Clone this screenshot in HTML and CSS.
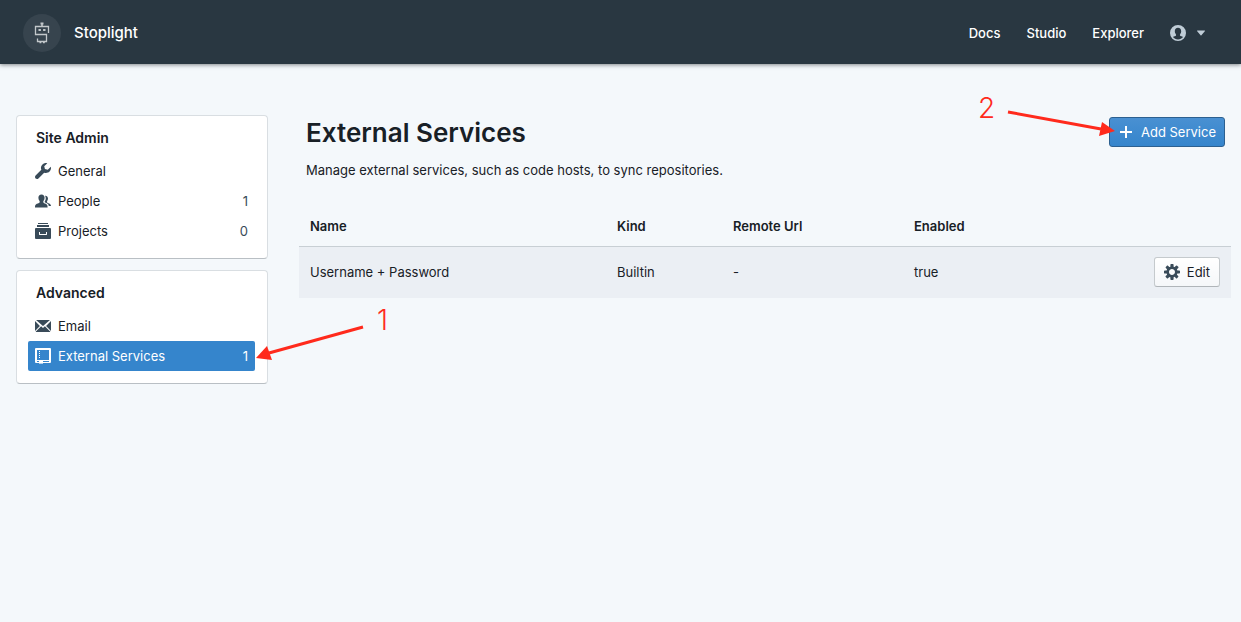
FILE: index.html
```html
<!DOCTYPE html>
<html lang="en">
<head>
<meta charset="utf-8">
<title>External Services - Stoplight</title>
<link rel="stylesheet" href="styles.css">
</head>
<body>
<header class="topbar">
  <a class="brand" href="#">
    <span class="brand-logo">
      <svg width="16" height="22" viewBox="0 0 16 22" fill="none" stroke="#c3c8cb" stroke-width="1.3" aria-hidden="true">
        <path d="M14.500 11V4.500H1.500V12.500H12.500V19.500H3.500V16.500"/>
        <path d="M8 4.500V2" stroke-width="1.600"/>
        <path d="M6.500 1.500h3M4.500 8h2.400M9.100 8h2.400" stroke-width="1.800"/>
        <path d="M5.500 20.500h1.800M9 20.500h1.800"/>
      </svg>
    </span>
    <span>Stoplight</span>
  </a>
  <nav class="topnav">
    <a href="#">Docs</a>
    <a href="#">Studio</a>
    <a href="#">Explorer</a>
    <button class="user-menu" type="button" aria-label="Account">
      <svg width="16" height="16" viewBox="0 0 16 16" aria-hidden="true"><path fill="#bfccd6" fill-rule="evenodd" d="M8 0a8 8 0 1 0 0 16A8 8 0 0 0 8 0zM8 14.400c-2.100 0-3.900-.9-5-2.400 .9-.5 2.600-.8 3-1.400 .3-.6 0-1.200-.4-1.800-.5-.7-.8-1.600-.8-2.600C4.800 4.100 6 2.700 8 2.700s3.200 1.400 3.200 3.500c0 1-.3 1.900-.8 2.600-.4.600-.7 1.200-.4 1.800.4.600 2.100.9 3 1.400-1.100 1.500-2.900 2.400-5 2.400z"/></svg>
      <svg width="8" height="6" viewBox="0 0 8 6" aria-hidden="true"><path fill="#bfccd6" d="M.6.500h6.800c.6 0 .7.400.4.800L4.400 5.200c-.2.300-.6.300-.8 0L.2 1.300C-.1.900 0 .5.600.5z"/></svg>
    </button>
  </nav>
</header>

<div class="page">
  <aside class="sidebar">
    <section class="card">
      <h2>Site Admin</h2>
      <a class="item" href="#">
        <svg width="16" height="16" viewBox="0 0 16 16" aria-hidden="true"><path d="M15.830 3.700l-3.060 3.050-2.840-.7-.7-2.830L12.290.170a5.004 5.004 0 0 0-4.830 1.290 4.967 4.967 0 0 0-1.120 5.360L.58 12.580c-.36.360-.58.860-.58 1.410 0 1.100.9 2 2 2 .55 0 1.050-.22 1.410-.59l5.770-5.770c1.790.690 3.910.330 5.350-1.120 1.320-1.300 1.740-3.150 1.300-4.810z"/></svg>
        <span>General</span>
      </a>
      <a class="item" href="#">
        <svg width="16" height="16" viewBox="0 0 16 16" aria-hidden="true"><path d="M6.500 1.500C8.500 1.500 9.600 2.900 9.600 4.700c0 1.300-.4 2.300-1 3.100-.4.600-.5 1.300-.2 1.800.4.700 2.300 1.200 3.300 1.800.8.500.9 1.600.9 3.100H0c0-1.500.1-2.600.9-3.100 1-.6 3.200-1.100 3.700-1.800.3-.5.200-1.200-.2-1.800-.6-.8-1-1.800-1-3.100C3.400 2.900 4.500 1.500 6.500 1.500z"/><path d="M10 2.700c1.700-.2 3 .9 3 2.800 0 1-.3 1.800-.8 2.500-.3.500-.4 1-.1 1.400.4.500 2 .9 2.900 1.500.7.500 1 1.200 1 2.100h-2.300c0-1.100-.5-2-1.500-2.500-1.100-.6-2.100-.8-2.400-1.200-.3-.4 0-1 .3-1.500C11 6.400 11 4.200 10 2.700z"/></svg>
        <span>People</span><span class="count">1</span>
      </a>
      <a class="item" href="#">
        <svg width="16" height="16" viewBox="0 0 16 16" aria-hidden="true"><path fill-rule="evenodd" d="M3 0h10v1H3zM2 2h12v2H2zM1 5h14a1 1 0 0 1 1 1v9a1 1 0 0 1-1 1H1a1 1 0 0 1-1-1V6a1 1 0 0 1 1-1zM4 9v2.500c0 .3.200.5.500.5h7c.3 0 .5-.2.500-.5V9h-1v2H5V9z"/></svg>
        <span>Projects</span><span class="count">0</span>
      </a>
    </section>

    <section class="card">
      <h2>Advanced</h2>
      <a class="item" href="#">
        <svg width="16" height="16" viewBox="0 0 16 16" aria-hidden="true"><path d="M0 3.060v9.880L4.940 8zM14.940 2H1.060L8 7.960zM8 10.040l-1.900-1.700L.6 13.840c.1.100.3.160.4.160h14c.1 0 .3-.06.400-.16l-5.500-5.500zM11.060 8L16 12.940V3.060z"/></svg>
        <span>Email</span>
      </a>
      <a class="item item-active" href="#" aria-current="page">
        <svg width="16" height="16" viewBox="0 0 16 16" aria-hidden="true"><path fill-rule="evenodd" d="M1 0h14a1 1 0 0 1 1 1v13a1 1 0 0 1-1 1H8v1l-1-.8L6 16l-1-.8L4 16v-1H1a1 1 0 0 1-1-1V1a1 1 0 0 1 1-1zM2 2v10h12V2zM2 13v1h2v-1zM8 13v1h6v-1z"/><path d="M4 3h1v1H4zM4 5h1v1H4zM4 7h1v1H4zM4 9h1v1H4z"/></svg>
        <span>External Services</span><span class="count">1</span>
        <svg class="arrow arrow-one" width="140" height="60" viewBox="0 0 140 60" aria-hidden="true">
          <path class="shaft" d="M108 22L14 48"/><path class="tip" d="M1 53L12 41L17 55z"/>
          <text x="122" y="25">1</text>
        </svg>
      </a>
    </section>
  </aside>

  <main class="main">
    <div class="heading">
      <div>
        <h1>External Services</h1>
        <p>Manage external services, such as code hosts, to sync repositories.</p>
      </div>
      <button class="btn btn-primary" type="button">
        <svg width="16" height="16" viewBox="0 0 16 16" aria-hidden="true"><path d="M7 2h2v5h5v2H9v5H7V9H2V7h5z"/></svg>
        <span>Add Service</span>
        <svg class="arrow arrow-two" width="140" height="50" viewBox="0 0 140 50" aria-hidden="true">
          <path class="shaft" d="M33 20L126 37"/><path class="tip" d="M140 39L127 30L124 44z"/>
          <text x="3" y="26">2</text>
        </svg>
      </button>
    </div>

    <table class="services">
      <colgroup><col class="col-name"><col class="col-kind"><col class="col-url"><col></colgroup>
      <thead>
        <tr><th>Name</th><th>Kind</th><th>Remote Url</th><th>Enabled</th><th></th></tr>
      </thead>
      <tbody>
        <tr>
          <td>Username + Password</td><td>Builtin</td><td>-</td><td>true</td>
          <td class="actions">
            <button class="btn" type="button">
              <svg width="16" height="16" viewBox="0 0 16 16" aria-hidden="true"><path d="M15.190 6.390h-1.850c-.11-.37-.27-.71-.45-1.040l1.360-1.360c.31-.31.310-.82 0-1.130l-1.130-1.130a.803.803 0 0 0-1.130 0l-1.360 1.360c-.33-.17-.67-.33-1.040-.44V.790c0-.44-.36-.8-.8-.8h-1.600c-.44 0-.8.360-.8.800v1.860c-.39.120-.75.280-1.100.470l-1.300-1.300c-.3-.3-.79-.3-1.090 0L1.820 2.910c-.3.300-.3.790 0 1.090l1.300 1.300c-.2.340-.36.700-.48 1.090H.790c-.44 0-.8.360-.8.800v1.600c0 .44.360.8.800.8h1.850c.11.370.27.710.45 1.040l-1.360 1.360c-.31.310-.31.820 0 1.130l1.130 1.130c.31.310.82.310 1.130 0l1.360-1.360c.33.180.67.330 1.040.440v1.860c0 .44.360.8.800.8h1.600c.44 0 .8-.36.800-.8v-1.860c.39-.12.750-.28 1.100-.47l1.300 1.300c.3.300.79.300 1.090 0l1.090-1.090c.3-.3.300-.79 0-1.090l-1.300-1.300c.19-.35.360-.71.480-1.100h1.850c.44 0 .8-.36.800-.8v-1.600a.816.816 0 0 0-.81-.79zm-7.200 4.600c-1.660 0-3-1.340-3-3s1.340-3 3-3 3 1.340 3 3-1.340 3-3 3z"/></svg>
              <span>Edit</span>
            </button>
          </td>
        </tr>
      </tbody>
    </table>
  </main>
</div>
</body>
</html>
```
FILE: styles.css
```css
* { box-sizing: border-box; }

body {
  margin: 0;
  background: #f4f8fb;
  color: #182026;
  font: 13px/18px Inter, "Liberation Sans", sans-serif;
}

a { color: inherit; text-decoration: none; }
h1, h2, p { margin: 0; }
svg { flex: none; }

.topbar {
  display: flex;
  align-items: center;
  justify-content: space-between;
  height: 64px;
  padding: 1px 36px 0 23px;
  background: #293741;
  color: #fff;
  box-shadow: 0 1px 4px rgba(16, 22, 26, 0.5);
}

.brand {
  display: flex;
  align-items: center;
  gap: 13px;
  font-size: 15px;
  line-height: 20px;
  font-weight: 500;
}

.brand-logo {
  display: flex;
  align-items: center;
  justify-content: center;
  width: 38px;
  height: 38px;
  border-radius: 50%;
  background: #37444e;
}

.topnav {
  display: flex;
  align-items: center;
  gap: 26px;
  font-weight: 500;
}

.user-menu {
  display: flex;
  align-items: center;
  gap: 11px;
  padding: 0;
  border: 0;
  background: none;
}

.page {
  display: flex;
  align-items: flex-start;
  gap: 31px;
  padding: 51px 10px 24px 16px;
}

.sidebar {
  display: flex;
  flex: none;
  flex-direction: column;
  gap: 11px;
  width: 252px;
}

.card {
  padding: 13px 12px 12px 11px;
  border: 1px solid #d9dee2;
  border-bottom-color: #b9bfc4;
  border-radius: 4px;
  background: #fff;
}

.card h2 {
  margin: 0 0 9px 8px;
  font-size: 14px;
  line-height: 18px;
  font-weight: 600;
}

.item {
  position: relative;
  display: flex;
  align-items: center;
  gap: 7px;
  height: 30px;
  padding: 0 7px;
  border-radius: 2px;
}

.item svg { fill: #394b59; }
.count { margin-left: auto; color: #394b59; }

.item-active { background: #3585cc; color: #fff; }
.item-active svg { fill: #fff; }
.item-active .count { color: #fff; }

.main { flex: 1; min-width: 0; }

.heading {
  display: flex;
  align-items: flex-start;
  justify-content: space-between;
  padding: 2px 6px 0 7px;
}

h1 {
  margin-bottom: 13px;
  font-size: 26px;
  line-height: 31px;
  font-weight: 600;
}

.btn {
  position: relative;
  display: inline-flex;
  align-items: center;
  gap: 7px;
  height: 30px;
  padding: 0 9px;
  border: 1px solid #c5cacd;
  border-bottom-color: #b0b5b9;
  border-radius: 3px;
  background: linear-gradient(#fff, #f5f7f9);
  color: #182026;
  font: inherit;
}

.btn svg { fill: #394b59; }

.btn-primary {
  padding: 0 8px;
  border-color: #2c6090;
  background: linear-gradient(#4990d2, #3585cc);
  color: #fff;
}

.btn-primary svg { fill: #fff; }

.services {
  width: 100%;
  margin-top: 27px;
  border-collapse: separate;
  border-spacing: 0;
  table-layout: fixed;
}

.col-name { width: 307px; }
.col-kind { width: 116px; }
.col-url { width: 181px; }

.services th {
  padding: 11px;
  font-weight: 600;
  text-align: left;
}

.services td {
  padding: 10px 11px 11px;
  border-top: 1px solid #c8cfd4;
  background: #ebeff4;
}

.services .actions { text-align: right; }
.actions .btn { vertical-align: top; }

.arrow { position: absolute; overflow: visible; }
.arrow-one { left: 227px; top: -36px; }
.arrow-two { right: 109px; top: -26px; }
.arrow .shaft { fill: none; stroke: #ff2a1c; stroke-width: 3; }
.arrow .tip { fill: #ff2a1c; }

.arrow text {
  fill: #ff2a1c;
  font-family: Inter, sans-serif;
  font-size: 28px;
  font-weight: 300;
}
```
